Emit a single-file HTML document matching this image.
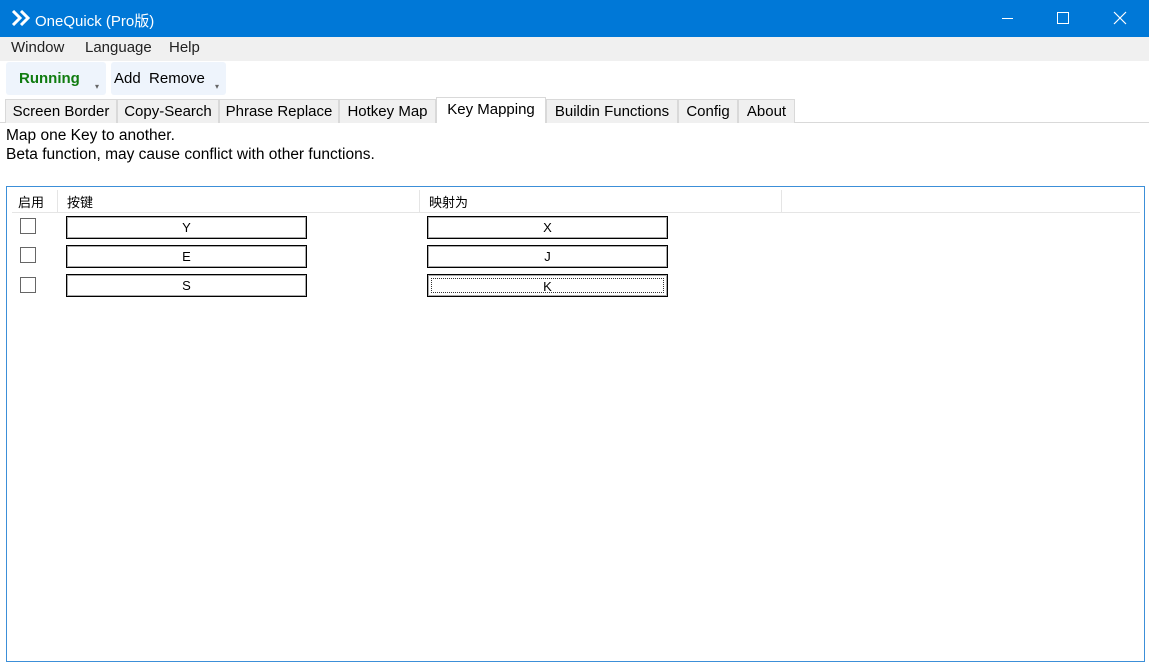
<!DOCTYPE html>
<html><head><meta charset="utf-8"><style>
*{margin:0;padding:0;box-sizing:border-box}
body{width:1149px;height:667px;background:#fff;font-family:"Liberation Sans","Noto Sans CJK SC",sans-serif;font-size:15px;color:#000;position:relative;overflow:hidden}
.a{position:absolute;white-space:nowrap}
.tab{position:absolute;top:99px;height:24px;background:#f0f0f0;border:1px solid #d9d9d9;border-bottom:none;padding:3px 0 0 0;text-align:center;font-size:15px}
.cb{position:absolute;left:20px;width:16px;height:16px;border:1px solid #666;background:#fff}
.btn{position:absolute;height:23px;border:1px solid #000;box-shadow:inset 0 0 0 1px #aaa;background:#fff;text-align:center;line-height:21px;font-size:13px}
</style></head><body>
<div class="a" style="left:0;top:0;width:1149px;height:37px;background:#0078d7"></div>
<svg class="a" style="left:11px;top:10px" width="20" height="16" viewBox="0 0 20 16"><path d="M2 1l7 7-7 7M10 1l7 7-7 7" stroke="#fff" stroke-width="3" fill="none"/></svg>
<div class="a" style="left:35px;top:10px;color:#fff;font-size:15px">OneQuick (Pro版)</div>
<div class="a" style="left:1002px;top:18px;width:11px;height:1px;background:#fff"></div>
<div class="a" style="left:1057px;top:12px;width:12px;height:12px;border:1px solid #fff"></div>
<svg class="a" style="left:1113px;top:11px" width="14" height="14"><path d="M1 1L13 13M13 1L1 13" stroke="#fff" stroke-width="1.2"/></svg>
<div class="a" style="left:0;top:37px;width:1149px;height:24px;background:#f0f0f0"></div>
<div class="a" style="left:11px;top:39px;color:#222;font-size:15px">Window</div>
<div class="a" style="left:85px;top:39px;color:#222;font-size:15px">Language</div>
<div class="a" style="left:169px;top:39px;color:#222;font-size:15px">Help</div>
<div class="a" style="left:6px;top:62px;width:100px;height:33px;background:#eef4fc;border-radius:3px"></div>
<div class="a" style="left:19px;top:70px;color:#107c10;font-weight:bold">Running</div>
<div class="a" style="left:95px;top:82px;font-size:8px;color:#666">▾</div>
<div class="a" style="left:111px;top:62px;width:115px;height:33px;background:#eef4fc;border-radius:3px"></div>
<div class="a" style="left:114px;top:70px">Add&nbsp; Remove</div>
<div class="a" style="left:215px;top:82px;font-size:8px;color:#666">▾</div>
<div class="a" style="left:0;top:122px;width:1149px;height:1px;background:#d9d9d9"></div>
<div class="tab" style="left:5px;width:112px">Screen Border</div>
<div class="tab" style="left:117px;width:102px">Copy-Search</div>
<div class="tab" style="left:219px;width:120px">Phrase Replace</div>
<div class="tab" style="left:339px;width:97px">Hotkey Map</div>
<div class="tab" style="left:436px;top:97px;height:26px;width:110px;background:#fff">Key Mapping</div>
<div class="tab" style="left:546px;width:132px">Buildin Functions</div>
<div class="tab" style="left:678px;width:60px">Config</div>
<div class="tab" style="left:738px;width:57px">About</div>
<div class="a" style="left:6px;top:127px;font-size:15.5px">Map one Key to another.</div>
<div class="a" style="left:6px;top:146px;font-size:15.5px">Beta function, may cause conflict with other functions.</div>
<div class="a" style="left:6px;top:186px;width:1139px;height:476px;border:1px solid #3c8fd8"></div>
<div class="a" style="left:12px;top:190px;width:1128px;height:23px;border-bottom:1px solid #e5e5e5"></div>
<div class="a" style="left:57px;top:190px;width:1px;height:22px;background:#e5e5e5"></div>
<div class="a" style="left:419px;top:190px;width:1px;height:22px;background:#e5e5e5"></div>
<div class="a" style="left:781px;top:190px;width:1px;height:22px;background:#e5e5e5"></div>
<div class="a" style="left:18px;top:192px;font-size:13px">启用</div>
<div class="a" style="left:67px;top:192px;font-size:13px">按键</div>
<div class="a" style="left:429px;top:192px;font-size:13px">映射为</div>
<div class="cb" style="top:218px"></div>
<div class="cb" style="top:247px"></div>
<div class="cb" style="top:277px"></div>
<div class="btn" style="left:66px;top:216px;width:241px">Y</div>
<div class="btn" style="left:66px;top:245px;width:241px">E</div>
<div class="btn" style="left:66px;top:274px;width:241px">S</div>
<div class="btn" style="left:427px;top:216px;width:241px">X</div>
<div class="btn" style="left:427px;top:245px;width:241px">J</div>
<div class="btn" style="left:427px;top:274px;width:241px"><div style="position:absolute;left:3px;top:3px;right:3px;bottom:3px;border:1px dotted #333;line-height:15px">K</div></div>
</body></html>
